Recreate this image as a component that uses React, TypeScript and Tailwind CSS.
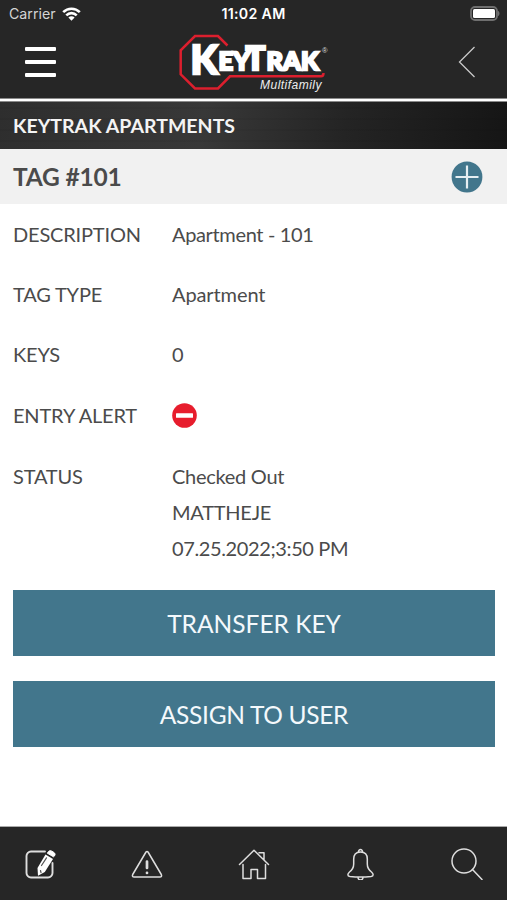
import type { ReactNode } from "react";

function StatusBar() {
  return (
    <div className="flex h-7 items-center justify-between pl-[9px] pr-[7px] font-['Inter',sans-serif] text-[14px] text-[#d4d4d4]">
      <div className="flex w-24 items-center gap-[6px]">
        <span className="text-[14.2px]">Carrier</span>
        <svg width="19" height="14" viewBox="0 0 19 14" fill="none" stroke="#fff" strokeWidth="2.6">
          <path d="M1.2 5.1a11.8 11.8 0 0 1 16.600 0" />
          <path d="M4.300 8.300a7.400 7.400 0 0 1 10.400 0" />
          <path d="M9.500 13.700 6.400 10.500a4.400 4.400 0 0 1 6.200 0z" fill="#fff" stroke="none" />
        </svg>
      </div>
      <span className="pr-[2px] text-[14.200px] font-semibold tracking-[0.3px] text-white">11:02 AM</span>
      <div className="flex w-24 justify-end">
        <svg width="31" height="16" viewBox="0 0 31 16">
          <rect x="2" y="1" width="26" height="13" rx="4" fill="#262626" stroke="#6f6f6f" strokeWidth="1.800" />
          <rect x="4" y="3" width="22" height="9" rx="1.500" fill="#fff" />
          <path d="M29 5c2 .6 2 4.400 0 5z" fill="#6f6f6f" />
        </svg>
      </div>
    </div>
  );
}

function Logo() {
  return (
    <svg width="154" height="60" viewBox="177 33 154 60">
      <path
        d="M227.500 45.500 218 36H195L180.700 50.300V74.300L195 88.400H218L230 76.300H321Q323.500 76.300 323.500 73"
        fill="none"
        stroke="#dc1f2e"
        strokeWidth="2.500"
      />
      <text y="70" fill="#fff" stroke="#fff" strokeWidth="2.300" fontFamily="Lato, sans-serif" fontWeight="900" fontSize="25.500">
        <tspan x="190.500" y="74" fontSize="39.500">K</tspan>
        <tspan x="218.500" y="69.500">EY</tspan>
        <tspan x="245.500" y="69.500" fontSize="33">T</tspan>
        <tspan x="266.500" y="69.500">RAK</tspan>
      </text>
      <text x="322" y="53" fontSize="7.500" fill="#ddd" fontFamily="Liberation Sans, sans-serif">®</text>
      <text x="260" y="88.500" fontSize="12" textLength="61.500" fill="#eee" fontStyle="italic" fontFamily="Liberation Sans, sans-serif">
        Multifamily
      </text>
    </svg>
  );
}

function Header() {
  return (
    <header className="h-[98px] bg-[#262626]">
      <StatusBar />
      <div className="flex h-[70px] items-start justify-between pl-[25px] pr-[31px]">
        <button aria-label="Menu" className="mt-[19px] flex w-[31px] flex-col gap-[9px]">
          <span className="h-[4px] rounded-[1px] bg-white" />
          <span className="h-[4px] rounded-[1px] bg-white" />
          <span className="h-[4px] rounded-[1px] bg-white" />
        </button>
        <div className="mt-[5px] pr-[7px]">
          <Logo />
        </div>
        <button aria-label="Back" className="mt-[18px] flex w-[18px]">
          <svg width="18" height="32" viewBox="0 0 18 32" fill="none" stroke="#c9c9c9" strokeWidth="1.300">
            <path d="M16.500 1 1.500 16l15 15" />
          </svg>
        </button>
      </div>
    </header>
  );
}

function Row({ label, children, className }: { label: string; children: ReactNode; className: string }) {
  return (
    <div className={`flex items-start leading-9 ${className}`}>
      <dt className="w-[159px] shrink-0 tracking-[-0.18px]">{label}</dt>
      <dd>{children}</dd>
    </div>
  );
}

function NavIcon({ label, children }: { label: string; children: ReactNode }) {
  return (
    <button aria-label={label} className="flex w-8 justify-center">
      <svg width="32" height="32" viewBox="0 0 32 32" fill="none" stroke="#dedede" strokeWidth="1.500" strokeLinecap="round" strokeLinejoin="round">
        {children}
      </svg>
    </button>
  );
}

export default function App() {
  return (
    <div className="flex h-[900px] w-[507px] flex-col overflow-hidden bg-white font-['Lato',sans-serif] text-[#4b4b4b]">
      <Header />
      <div className="h-[4px] border-t border-b border-[#8a8a8a] bg-white" />
      <div className="flex h-[47px] items-center bg-[repeating-linear-gradient(180deg,transparent_0px,transparent_5px,#00000018_6px,transparent_7px,transparent_11px),linear-gradient(100deg,#2e2e2e_0%,#383838_40%,#242424_68%,#151515_100%)] px-[13px]">
        <h1 className="pt-px text-[19.500px] font-bold tracking-[0.03px] text-[#f4f4f4]">KEYTRAK APARTMENTS</h1>
      </div>
      <div className="flex h-[55px] items-center justify-between bg-[#f1f1f1] pl-[13px] pr-6">
        <h2 className="pt-[2px] text-[24.500px] font-bold tracking-[-0.200px]">TAG #101</h2>
        <button aria-label="Add">
          <svg width="32" height="32" viewBox="0 0 32 32">
            <circle cx="16" cy="16" r="15.400" fill="#42768c" />
            <path d="M16 4.500v23M4.500 16h23" stroke="#e6eef2" strokeWidth="2.200" />
          </svg>
        </button>
      </div>
      <main className="flex-1 px-[13px] pt-[13px] text-[20px]">
        <dl>
          <Row label="DESCRIPTION" className="-mt-px h-[60px]"><span className="tracking-[-0.350px]">Apartment - 101</span></Row>
          <Row label="TAG TYPE" className="h-[60px]"><span className="tracking-[-0.100px]">Apartment</span></Row>
          <Row label="KEYS" className="h-[61px]">0</Row>
          <Row label="ENTRY ALERT" className="h-[61px]">
            <svg className="mt-[6px]" width="25" height="25" viewBox="0 0 25 25">
              <circle cx="12.500" cy="12.500" r="12.300" fill="#e71d2d" />
              <rect x="4" y="10.300" width="17" height="4.400" rx="0.500" fill="#fff" />
            </svg>
          </Row>
          <Row label="STATUS" className="h-[108px]">
            <p className="tracking-[-0.280px]">Checked Out</p>
            <p className="tracking-[-0.250px]">MATTHEJE</p>
            <p className="tracking-[-0.380px]">07.25.2022;3:50 PM</p>
          </Row>
        </dl>
        <div className="-mr-px mt-6 flex flex-col gap-[25px] text-[24.500px] text-[#f4f9fc]">
          <button className="h-[66px] bg-[#42768c] pt-[2px]">TRANSFER KEY</button>
          <button className="h-[66px] bg-[#42768c] pt-[2px] tracking-[-0.300px]">ASSIGN TO USER</button>
        </div>
      </main>
      <nav className="flex h-[74px] items-center justify-between border-t border-[#aaa] bg-[#262626] px-6">
        <NavIcon label="Edit">
          <path d="M21 3.500H7A4.500 4.500 0 0 0 2.500 8v17A4.500 4.500 0 0 0 7 29.500h17a4.500 4.500 0 0 0 4.500-4.500V15" strokeWidth="1.900" />
          <path d="m21.500 6.500 7.500 4.400-8.200 13.200-6.800 3.600-.5-7.700z" fill="#fff" stroke="none" />
          <path d="M24 4.200q1.300-2.500 3.500-1.200l2.500 1.500q2 1.200.5 3.500l-1 .8-6-3.500z" fill="#fff" stroke="#fff" strokeWidth="1" />
          <path d="m17.500 17.500 5-7.700M16.500 22.500l.5 2.200" stroke="#555" strokeWidth="1.200" />
        </NavIcon>
        <NavIcon label="Alerts">
          <path d="M15 4q1-1.200 2 0l13.300 22.500q1 2.300-1.500 2.500H3.200q-2.500-.2-1.500-2.500z" />
          <path d="M16 13.500v6.500M16 24.800v.2" strokeWidth="2.700" />
        </NavIcon>
        <NavIcon label="Home">
          <path d="M1.500 16.500 16 2.300l14.500 14.200M21 4.800h5v6.700M5 16.500V30.500h8v-9h6.500v9h8V16.500" />
        </NavIcon>
        <NavIcon label="Notifications">
          <path d="M16.500 4c-5 0-6.800 3-6.800 7v5c0 4-1.500 6-4.200 8-2 1.800-2.500 4 .5 4.500 6.500.7 14.500.7 21 0 3-.5 2.500-2.700.5-4.500-2.700-2-4.200-4-4.200-8v-5c0-4-1.800-7-6.800-7zM14.500 4c-.3-3.300 4.300-3.300 4 0M14 29.300c0 3.500 5 3.500 5 0" />
        </NavIcon>
        <NavIcon label="Search">
          <circle cx="13" cy="13" r="12" />
          <path d="m21.500 21.500 9.500 10" />
        </NavIcon>
      </nav>
    </div>
  );
}
